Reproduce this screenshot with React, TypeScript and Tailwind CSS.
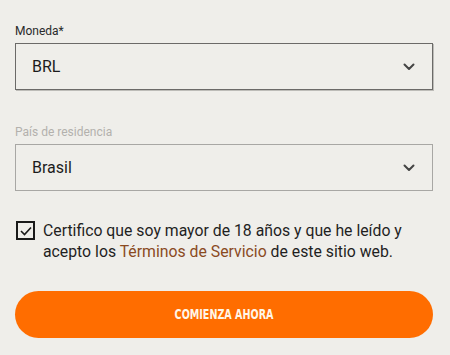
import React, { useState } from "react";

const Chevron = () => (
  <svg width="12" height="8" viewBox="0 0 12 8" fill="none" className="shrink-0">
    <path d="M1.5 1.5L6 6l4.5-4.5" stroke="#444" strokeWidth="2" strokeLinecap="round" strokeLinejoin="round" />
  </svg>
);

const SelectField = ({ label, value, muted }: { label: string; value: string; muted?: boolean }) => (
  <div className="flex flex-col">
    <span
      className={`text-[12px] leading-[14px] mb-[5px] ${muted ? "text-[#b3b1ad]" : "text-[#2a2a2a]"}`}
    >
      {label}
    </span>
    <div
      className={`h-[47px] flex items-center justify-between pl-[16px] pr-[17px] border ${
        muted ? "border-[#a8a7a4]" : "border-[#6b6a68] shadow-[1px_1px_0_#bdbcb8]"
      }`}
    >
      <span className="text-[16px] text-[#1c1c1c]">{value}</span>
      <Chevron />
    </div>
  </div>
);

export default function App() {
  const [checked, setChecked] = useState(true);

  return (
    <div
      className="w-[450px] h-[355px] bg-[#efeeea] pl-[15px] pr-[17px] pt-[24px] flex flex-col overflow-hidden"
      style={{ fontFamily: "Roboto, 'Liberation Sans', sans-serif" }}
    >
      <SelectField label="Moneda*" value="BRL" />
      <div className="h-[35px]" />
      <SelectField label="País de residencia" value="Brasil" muted />

      {/* Terms */}
      <div className="flex items-start gap-[8px] mt-[29px] pl-[1px]">
        <button
          className="w-[19px] h-[19px] border-2 border-[#1a1a1a] flex items-center justify-center shrink-0 mt-[1px]"
          onClick={() => setChecked(!checked)}
          aria-label="Aceptar"
        >
          {checked && (
            <svg width="12" height="10" viewBox="0 0 12 10" fill="none">
              <path d="M1 5l3.5 3.5L11 1.5" stroke="#1a1a1a" strokeWidth="1.6" />
            </svg>
          )}
        </button>
        <p className="text-[15.8px] leading-[21px] text-[#1f1f1f]">
          Certifico que soy mayor de 18 años y que he leído y acepto los{" "}
          <a className="text-[#8a4a1f]">Términos de Servicio</a> de este sitio web.
        </p>
      </div>

      <button
        className="mt-[29px] h-[47px] w-full rounded-full bg-[#ff6d00] text-[#fff6e8] uppercase text-[14px] font-bold flex items-center justify-center"
        style={{ fontFamily: "'DejaVu Sans Condensed', 'Liberation Sans Narrow', sans-serif" }}
      >
        <span className="inline-block scale-x-[0.76]">Comienza ahora</span>
      </button>
    </div>
  );
}
